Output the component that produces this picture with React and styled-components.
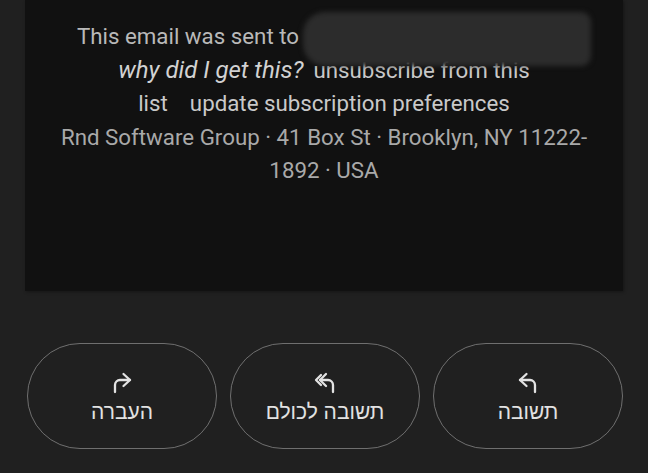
import React from "react";
import styled, { createGlobalStyle } from "styled-components";

const Global = createGlobalStyle`
  html, body { margin: 0; padding: 0; background: #202020; }
  body { font-family: Roboto, "Liberation Sans", sans-serif; }
`;

const Page = styled.div`
  width: 648px;
  height: 473px;
  background: #202020;
  display: flex;
  flex-direction: column;
  overflow: hidden;
`;

const Card = styled.div`
  position: relative;
  margin: 0 25px;
  height: 291px;
  box-sizing: border-box;
  padding-top: 20px;
  background: #111111;
  box-shadow: 1px 1px 3px rgba(0, 0, 0, 0.35);
  display: flex;
  flex-direction: column;
  align-items: center;
`;

const Line = styled.div`
  font-size: 22.3px;
  line-height: 33.5px;
  height: 33.5px;
  color: ${(p) => p.$color || "#b9b9b9"};
  text-align: center;
  white-space: nowrap;
  display: flex;
  align-items: baseline;
  justify-content: center;
  gap: ${(p) => p.$gap || 0}px;
`;

const Link = styled.span`
  color: ${(p) => p.$color || "#c9c9c9"};
  font-style: ${(p) => (p.$italic ? "italic" : "normal")};
  font-size: ${(p) => (p.$italic ? "24px" : "inherit")};
`;

const EmailSpace = styled.span`
  display: inline-block;
  width: 272px;
`;

const Redaction = styled.div`
  position: absolute;
  left: 278px;
  top: 12px;
  width: 288px;
  height: 54px;
  border-radius: 22px 10px 10px 22px;
  background: #2c2c2c;
  filter: blur(2.5px);
`;

const Actions = styled.div`
  margin-top: 52px;
  padding: 0 25px;
  display: flex;
  direction: rtl;
  gap: 13px;
`;

const Pill = styled.button`
  width: 190px;
  height: 106px;
  border-radius: 53px;
  border: 1.5px solid #6f6f6f;
  background: transparent;
  color: #e2e2e2;
  display: flex;
  flex-direction: column;
  align-items: center;
  justify-content: center;
  gap: 6px;
  padding: 4px 0 0;
  box-sizing: border-box;
  font-family: "Liberation Sans", "DejaVu Sans", sans-serif;
  font-size: 21px;
  line-height: 24px;
`;

const IconWrap = styled.span`
  display: block;
  width: 24px;
  height: 22px;
  transform: ${(p) => (p.$flip ? "scaleX(-1)" : "none")};
`;

const Label = styled.span`
  direction: rtl;
  display: block;
`;

const ReplyIcon = ({ flip }) => (
  <IconWrap $flip={flip}>
    <svg width="24" height="22" viewBox="0 0 24 22" fill="none" stroke="#e2e2e2" strokeWidth="2.3" strokeLinecap="round" strokeLinejoin="round">
      <path d="M10.5 2 L4 8 L10.5 14" />
      <path d="M4 8 H14 A5 5 0 0 1 19 13 V20" />
    </svg>
  </IconWrap>
);

const ReplyAllIcon = () => (
  <IconWrap>
    <svg width="24" height="22" viewBox="0 0 24 22" fill="none" stroke="#e2e2e2" strokeWidth="2.3" strokeLinecap="round" strokeLinejoin="round">
      <path d="M8 3 L3 8 L8 13" />
      <path d="M13 2 L7 8 L13 14" />
      <path d="M7 8 H15 A5 5 0 0 1 20 13 V20" />
    </svg>
  </IconWrap>
);

export default function App() {
  return (
    <Page>
      <Global />
      <Card>
        <Line>
          This email was sent to
          <EmailSpace />
        </Line>
        <Line $gap={10}>
          <Link $italic $color="#d2d2d2">why did I get this?</Link>
          <Link>unsubscribe from this</Link>
        </Line>
        <Line $gap={22}>
          <Link>list</Link>
          <Link>update subscription preferences</Link>
        </Line>
        <Line $color="#a9a9a9">Rnd Software Group · 41 Box St · Brooklyn, NY 11222-</Line>
        <Line $color="#a9a9a9">1892 · USA</Line>
        <Redaction />
      </Card>
      <Actions>
        <Pill>
          <ReplyIcon />
          <Label>תשובה</Label>
        </Pill>
        <Pill>
          <ReplyAllIcon />
          <Label>תשובה לכולם</Label>
        </Pill>
        <Pill>
          <ReplyIcon flip />
          <Label>העברה</Label>
        </Pill>
      </Actions>
    </Page>
  );
}
